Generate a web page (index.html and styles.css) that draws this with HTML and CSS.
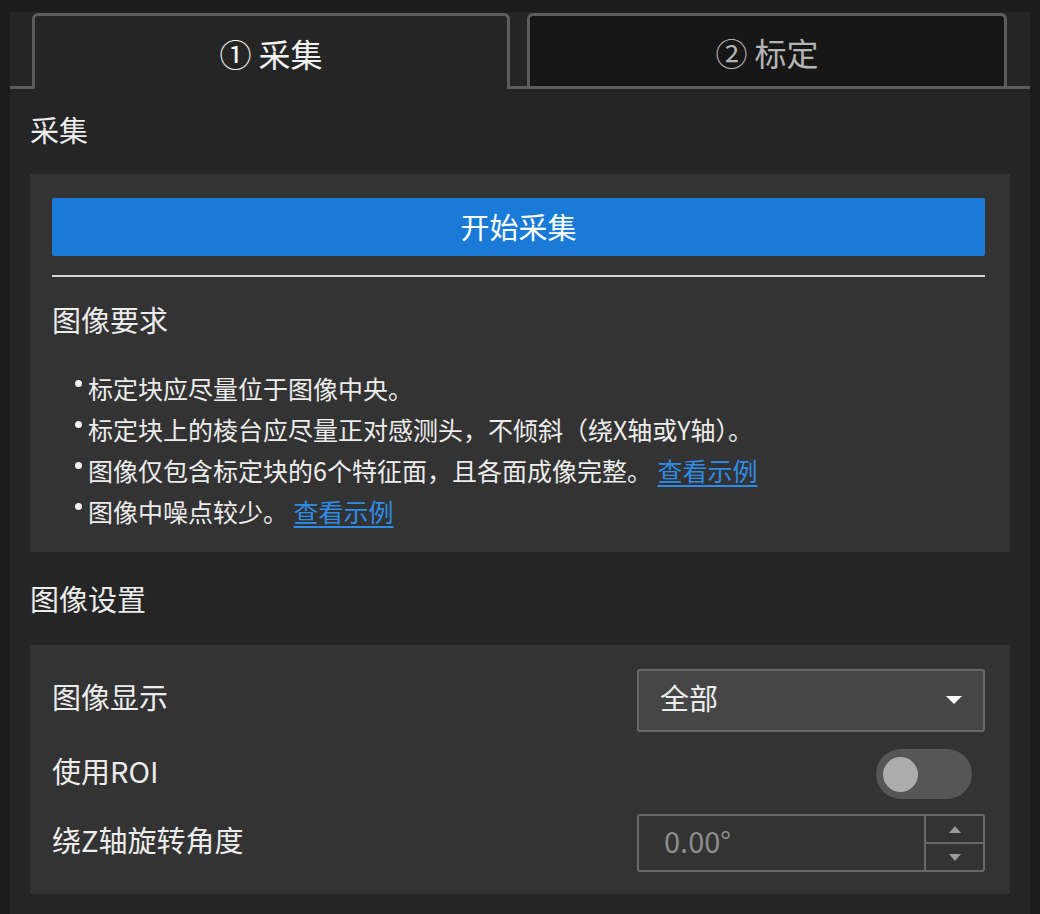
FILE: index.html
```html
<!DOCTYPE html>
<html lang="zh-CN">
<head>
    <meta charset="UTF-8">
    <title>采集</title>
    <link rel="stylesheet" href="styles.css">
</head>
<body>
    <div class="panel">
        <div class="tabs">
            <div class="tab active">① 采集</div>
            <div class="tab">② 标定</div>
        </div>
        <div class="content">
            <div class="section-title">采集</div>
            <div class="card card-capture">
                <button class="btn-primary">开始采集</button>
                <div class="divider"></div>
                <div class="sub-title">图像要求</div>
                <ul class="req-list">
                    <li>标定块应尽量位于图像中央。</li>
                    <li>标定块上的棱台应尽量正对感测头，不倾斜（绕X轴或Y轴）。</li>
                    <li>图像仅包含标定块的6个特征面，且各面成像完整。 <a href="#" class="link">查看示例</a></li>
                    <li>图像中噪点较少。 <a href="#" class="link">查看示例</a></li>
                </ul>
            </div>
            <div class="section-title title-settings">图像设置</div>
            <div class="card card-settings">
                <div class="row row-display">
                    <span class="label">图像显示</span>
                    <div class="select">
                        <span>全部</span>
                        <svg class="caret" width="18" height="10" viewBox="0 0 18 10"><path d="M1 1h16l-8 8z" fill="#fff"/></svg>
                    </div>
                </div>
                <div class="row row-roi">
                    <span class="label">使用ROI</span>
                    <div class="toggle"><span class="knob"></span></div>
                </div>
                <div class="row row-angle">
                    <span class="label">绕Z轴旋转角度</span>
                    <div class="spin">
                        <span class="spin-value">0.00°</span>
                        <div class="spin-btns">
                            <div class="spin-btn"><svg width="12" height="7" viewBox="0 0 12 7"><path d="M0 7L6 0l6 7z" fill="#9a9a9a"/></svg></div>
                            <div class="spin-btn"><svg width="12" height="7" viewBox="0 0 12 7"><path d="M0 0h12L6 7z" fill="#9a9a9a"/></svg></div>
                        </div>
                    </div>
                </div>
            </div>
        </div>
    </div>
</body>
</html>
```

FILE: styles.css
```css
body {
    margin: 0;
    background: #1c1c1c;
    font-family: "Noto Sans CJK SC", "Noto Sans", sans-serif;
    color: #ececec;
}
.panel {
    margin: 12px 10px 0 10px;
    background: #252525;
    height: 902px;
    padding-top: 1px;
    box-sizing: border-box;
}
.tabs {
    display: flex;
    gap: 17px;
    padding-left: 22px;
    border-bottom: 3px solid #5c5c5c;
    height: 73px;
}
.tab {
    width: 480px;
    height: 73px;
    box-sizing: border-box;
    border: 3px solid #5c5c5c;
    border-bottom: none;
    border-radius: 6px 6px 0 0;
    background: #161616;
    color: #b4b4b4;
    font-size: 32px;
    display: flex;
    align-items: center;
    justify-content: center;
    padding-top: 2px;
}
.tab.active {
    width: 478px;
    height: 76px;
    background: #252525;
    color: #f2f2f2;
    position: relative;
    z-index: 1;
    padding-top: 0;
}
.content {
    padding: 0 20px;
}
.section-title {
    font-size: 29px;
    line-height: 32px;
    margin-top: 24px;
    margin-bottom: 29px;
}
.title-settings {
    margin-top: 30px;
    margin-bottom: 31px;
}
.card {
    background: #333333;
    padding: 24px 25px 20px 22px;
}
.btn-primary {
    display: block;
    width: 100%;
    height: 58px;
    border: none;
    border-radius: 2px;
    background: #1a7ad8;
    color: #fff;
    font-family: inherit;
    font-size: 29px;
    padding: 0 0 2px 0;
}
.divider {
    height: 2px;
    background: #d6d6d6;
    margin-top: 19px;
}
.sub-title {
    font-size: 29px;
    line-height: 32px;
    margin-top: 26px;
}
.req-list {
    list-style: none;
    margin: 33px 0 0 0;
    padding: 0 0 0 36px;
}
.req-list li {
    font-size: 25px;
    line-height: 41px;
    position: relative;
    white-space: nowrap;
}
.req-list li::before {
    content: "";
    position: absolute;
    left: -13px;
    top: 12px;
    width: 7px;
    height: 7px;
    border-radius: 50%;
    background: #f0f0f0;
}
.link {
    color: #2f8ce6;
    text-decoration: underline;
    text-underline-offset: 4px;
}
.card-settings {
    padding: 24px 25px 22px 22px;
}
.row {
    display: flex;
    align-items: center;
    justify-content: space-between;
}
.label {
    font-size: 29px;
    padding-bottom: 9px;
}
.row-display { height: 63px; }
.row-roi { height: 50px; margin-top: 17px; }
.row-angle { height: 58px; margin-top: 15px; }
.select {
    width: 348px;
    height: 63px;
    box-sizing: border-box;
    background: #464646;
    border: 2px solid #686868;
    border-radius: 3px;
    display: flex;
    align-items: center;
    justify-content: space-between;
    padding: 0 20px 0 21px;
    font-size: 29px;
}
.select span {
    padding-bottom: 8px;
}
.caret {
    margin-bottom: 2px;
}
.toggle {
    width: 96px;
    height: 50px;
    border-radius: 25px;
    background: #565656;
    margin-right: 13px;
    display: flex;
    align-items: center;
    padding-left: 7px;
    box-sizing: border-box;
}
.knob {
    width: 35px;
    height: 35px;
    border-radius: 50%;
    background: #acacac;
}
.spin {
    width: 348px;
    height: 58px;
    box-sizing: border-box;
    border: 2px solid #686868;
    border-radius: 3px;
    display: flex;
}
.spin-value {
    flex: 1;
    display: flex;
    align-items: center;
    padding-left: 25px;
    padding-bottom: 7px;
    font-size: 29px;
    color: #8c8c8c;
}
.spin-btns {
    width: 57px;
    border-left: 2px solid #686868;
    display: flex;
    flex-direction: column;
}
.spin-btn {
    flex: 1;
    display: flex;
    align-items: center;
    justify-content: center;
}
.spin-btn + .spin-btn {
    border-top: 2px solid #686868;
}
```
